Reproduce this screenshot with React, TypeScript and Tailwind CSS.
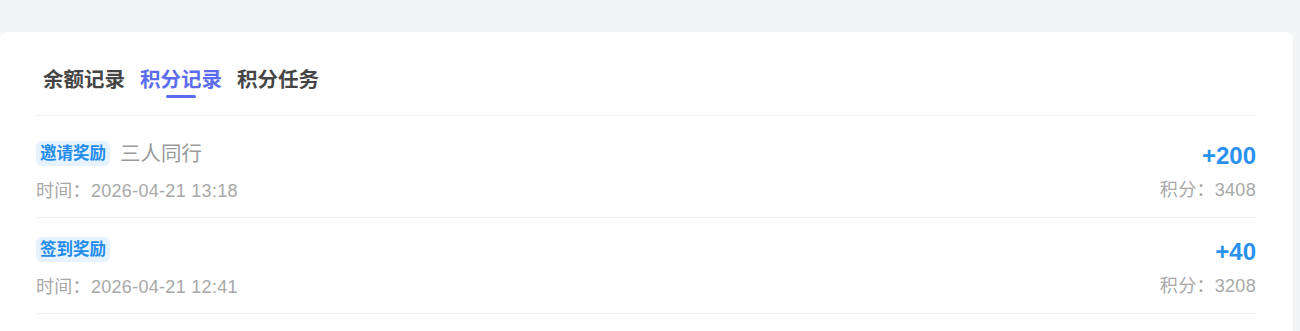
import React from "react";

const font = { fontFamily: '"Liberation Sans", "Noto Sans CJK SC", sans-serif' };

const rows = [
  { tag: "邀请奖励", title: "三人同行", time: "2026-04-21 13:18", delta: "+200", total: "3408" },
  { tag: "签到奖励", title: "", time: "2026-04-21 12:41", delta: "+40", total: "3208" },
];

export default function App() {
  return (
    <div className="min-h-[331px] bg-[#f3f4f6] pt-[32px] pr-[7px]" style={font}>
      <div className="rounded-lg bg-white px-[36px] pb-8">
        <div className="flex gap-[1px] border-b border-[#f0f0f0] pt-[34px]">
          {["余额记录", "积分记录", "积分任务"].map((t, i) => (
            <div key={t} className="flex flex-col items-center px-[7px] pb-[17px]">
              <span
                className={
                  "text-[20.5px] leading-[28px] font-bold " +
                  (i === 1 ? "text-[#5b6cf0]" : "text-[#454545]")
                }
              >
                {t}
              </span>
              <span
                className={
                  "mt-[1px] h-[3px] w-[30px] rounded-full " + (i === 1 ? "bg-[#5b6cf0]" : "bg-transparent")
                }
              />
            </div>
          ))}
        </div>
        <div className="mt-[6px]">
          {rows.map((r) => (
            <div key={r.time} className="flex justify-between border-b border-[#f0f0f0] pt-[19px] pb-[14px]">
              <div className="flex flex-col">
                <div className="flex h-[25px] items-center gap-[10px]">
                  <span className="flex h-[25px] items-center rounded-[6px] bg-[#e6f2ff] px-[4px] text-[16.5px] font-semibold text-[#1f8cec]">
                    {r.tag}
                  </span>
                  {r.title && <span className="text-[20.5px] leading-[25px] text-[#9a9a9a]">{r.title}</span>}
                </div>
                <div className="mt-[13px] text-[18px] leading-[24px] tracking-[0.3px] text-[#a8a8a8]">时间：{r.time}</div>
              </div>
              <div className="flex flex-col items-end pr-[1px]">
                <div className="mt-[2px] flex h-[25px] items-center text-[24px] font-bold text-[#2b91ef]">{r.delta}</div>
                <div className="mt-[10px] text-[18px] leading-[24px] tracking-[0.3px] text-[#a8a8a8]">积分：{r.total}</div>
              </div>
            </div>
          ))}
        </div>
      </div>
    </div>
  );
}
